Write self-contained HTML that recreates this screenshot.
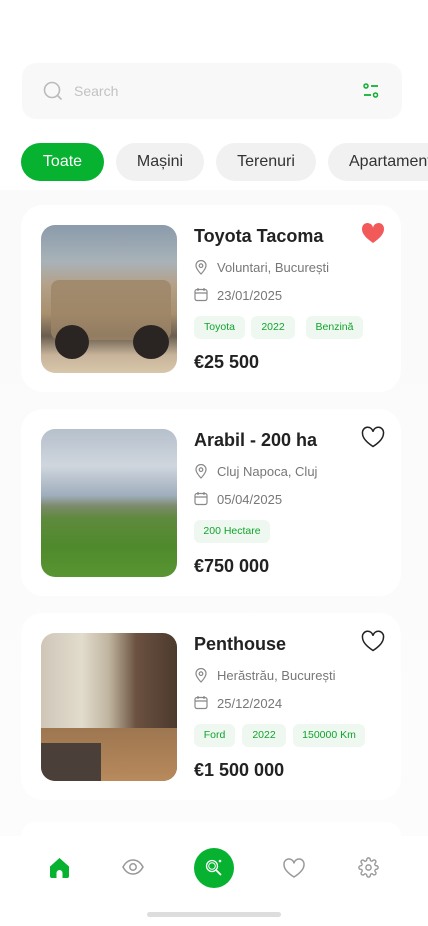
<!DOCTYPE html>
<html><head><meta charset="utf-8"><style>
*{margin:0;padding:0;box-sizing:border-box}
html,body{width:428px;height:926px;overflow:hidden}
body{background:#fff;font-family:"Liberation Sans",sans-serif;position:relative;color:#222}
.search{position:absolute;left:22px;top:63px;width:380px;height:56px;background:#f8f8f8;border-radius:14px}
.search span{position:absolute;left:52px;top:20px;font-size:14px;color:#c2c2c2}
.chip{position:absolute;top:143px;height:38px;border-radius:19px;background:#f1f1f1;font-size:16px;color:#333;line-height:38px;text-align:center}
.bg{position:absolute;left:0;top:190px;width:428px;height:646px;background:linear-gradient(180deg,#fafafa,#fcfcfc)}
.card{position:absolute;left:21px;width:380px;height:187px;background:#fff;border-radius:22px}
.img{position:absolute;left:20px;top:20px;width:136px;height:148px;border-radius:14px;overflow:hidden}
.t{position:absolute;left:173px;top:21px;font-size:18px;font-weight:bold;color:#222}
.l{position:absolute;left:196px;font-size:13px;color:#777}
.ic{position:absolute;left:173px}
.tag{position:absolute;height:23px;line-height:23px;border-radius:6px;background:#eff8f0;color:#0fa42c;font-size:10.5px;text-align:center}
.p{position:absolute;left:173px;font-size:18px;font-weight:bold;color:#222}
.hrt{position:absolute;left:340px;top:17px}
.nav{position:absolute;left:0;top:836px;width:428px;height:90px;background:#fff}
</style></head><body>
<div class="bg"></div>
<div class="search">
<svg style="position:absolute;left:21px;top:18px" width="20" height="20" viewBox="0 0 20 20"><circle cx="9" cy="9" r="7.5" fill="none" stroke="#bbb" stroke-width="1.6"/><path d="M14.5 14.5L18 18" stroke="#bbb" stroke-width="1.6" stroke-linecap="round"/></svg>
<span>Search</span>
<svg style="position:absolute;left:341px;top:20px" width="18" height="16" viewBox="0 0 18 16"><circle cx="3" cy="3" r="2" fill="none" stroke="#0db02f" stroke-width="1.5"/><path d="M8 3h7M1 12h7" stroke="#0db02f" stroke-width="1.8"/><circle cx="12.5" cy="12" r="2" fill="none" stroke="#0db02f" stroke-width="1.5"/></svg>
</div>
<div class="chip" style="left:21px;width:83px;background:#06b22f;color:#fff">Toate</div>
<div class="chip" style="left:116px;width:88px">Mașini</div>
<div class="chip" style="left:216px;width:100px">Terenuri</div>
<div class="chip" style="left:328px;width:100px;text-align:left;padding-left:21px;border-radius:19px 0 0 19px;white-space:nowrap;overflow:hidden">Apartamente</div>

<div class="card" style="top:205px">
<div class="img" style="background:linear-gradient(180deg,#8b9bab 0%,#a8b2b8 25%,#b4a189 40%,#a88f6e 60%,#6a5d4f 75%,#c7b49a 88%,#d8c6aa 100%)"><div style="position:absolute;left:10px;top:55px;width:120px;height:60px;background:#9c8466;border-radius:8px;opacity:.8"></div><div style="position:absolute;left:14px;top:100px;width:34px;height:34px;border-radius:50%;background:#2a2522"></div><div style="position:absolute;left:92px;top:100px;width:36px;height:34px;border-radius:50%;background:#2a2522"></div></div>
<div class="t">Toyota Tacoma</div>
<svg class="hrt" width="24" height="22" viewBox="0 0 24 22"><path d="M12 21C5 16 1 12 1 7a5.5 5.5 0 0 1 11-1 5.5 5.5 0 0 1 11 1c0 5-4 9-11 14z" fill="#f25a5a"/></svg>
<svg class="ic" style="top:55px" width="14" height="15" viewBox="0 0 14 15"><path d="M7 14s5-5 5-8.5A5 5 0 0 0 2 5.5C2 9 7 14 7 14z" fill="none" stroke="#888" stroke-width="1.2"/><circle cx="7" cy="5.7" r="1.8" fill="none" stroke="#888" stroke-width="1.2"/></svg>
<div class="l" style="top:55px">Voluntari, București</div>
<svg class="ic" style="top:82px" width="14" height="15" viewBox="0 0 14 15"><rect x="1" y="2.5" width="12" height="11" rx="2" fill="none" stroke="#888" stroke-width="1.2"/><path d="M1 6h12M4 1v3M10 1v3" stroke="#888" stroke-width="1.2"/></svg>
<div class="l" style="top:83px">23/01/2025</div>
<div class="tag" style="left:173px;top:111px;width:51px">Toyota</div>
<div class="tag" style="left:230px;top:111px;width:44px">2022</div>
<div class="tag" style="left:285px;top:111px;width:57px">Benzină</div>
<div class="p" style="top:147px">€25 500</div>
</div>

<div class="card" style="top:409px">
<div class="img" style="background:linear-gradient(180deg,#b6c0cb 0%,#cfd6de 25%,#9fadbc 45%,#7c8a6c 52%,#5f8a3e 60%,#4f8a2c 80%,#5a9532 100%)"></div>
<div class="t">Arabil - 200 ha</div>
<svg class="hrt" width="24" height="22" viewBox="0 0 24 22"><path d="M12 20.5C5 16 1.5 12 1.5 7.3a5 5 0 0 1 10.5-1.5 5 5 0 0 1 10.5 1.5c0 4.7-3.5 8.7-10.5 13.2z" fill="none" stroke="#222" stroke-width="1.5"/></svg>
<svg class="ic" style="top:55px" width="14" height="15" viewBox="0 0 14 15"><path d="M7 14s5-5 5-8.5A5 5 0 0 0 2 5.5C2 9 7 14 7 14z" fill="none" stroke="#888" stroke-width="1.2"/><circle cx="7" cy="5.7" r="1.8" fill="none" stroke="#888" stroke-width="1.2"/></svg>
<div class="l" style="top:55px">Cluj Napoca, Cluj</div>
<svg class="ic" style="top:82px" width="14" height="15" viewBox="0 0 14 15"><rect x="1" y="2.5" width="12" height="11" rx="2" fill="none" stroke="#888" stroke-width="1.2"/><path d="M1 6h12M4 1v3M10 1v3" stroke="#888" stroke-width="1.2"/></svg>
<div class="l" style="top:83px">05/04/2025</div>
<div class="tag" style="left:173px;top:111px;width:76px">200 Hectare</div>
<div class="p" style="top:147px">€750 000</div>
</div>

<div class="card" style="top:613px">
<div class="img" style="background:linear-gradient(90deg,#cfc6b8 0%,#e2dccd 30%,#bfb49f 50%,#6b5140 70%,#4c3a2e 100%)"><div style="position:absolute;left:0;top:95px;width:136px;height:53px;background:linear-gradient(180deg,#9d7650,#b88a5c)"></div><div style="position:absolute;left:0;top:110px;width:60px;height:38px;background:#4b3f39"></div></div>
<div class="t">Penthouse</div>
<svg class="hrt" width="24" height="22" viewBox="0 0 24 22"><path d="M12 20.5C5 16 1.5 12 1.5 7.3a5 5 0 0 1 10.5-1.5 5 5 0 0 1 10.5 1.5c0 4.7-3.5 8.7-10.5 13.2z" fill="none" stroke="#222" stroke-width="1.5"/></svg>
<svg class="ic" style="top:55px" width="14" height="15" viewBox="0 0 14 15"><path d="M7 14s5-5 5-8.5A5 5 0 0 0 2 5.5C2 9 7 14 7 14z" fill="none" stroke="#888" stroke-width="1.2"/><circle cx="7" cy="5.7" r="1.8" fill="none" stroke="#888" stroke-width="1.2"/></svg>
<div class="l" style="top:55px">Herăstrău, București</div>
<svg class="ic" style="top:82px" width="14" height="15" viewBox="0 0 14 15"><rect x="1" y="2.5" width="12" height="11" rx="2" fill="none" stroke="#888" stroke-width="1.2"/><path d="M1 6h12M4 1v3M10 1v3" stroke="#888" stroke-width="1.2"/></svg>
<div class="l" style="top:83px">25/12/2024</div>
<div class="tag" style="left:173px;top:111px;width:41px">Ford</div>
<div class="tag" style="left:221px;top:111px;width:44px">2022</div>
<div class="tag" style="left:272px;top:111px;width:72px">150000 Km</div>
<div class="p" style="top:147px">€1 500 000</div>
</div>
<div class="card" style="top:822px;height:14px;border-radius:22px 22px 0 0"></div>

<div class="nav">
<svg style="position:absolute;left:49px;top:21px" width="21" height="21" viewBox="0 0 21 21"><path d="M1 9.5L10.5 1 20 9.5V19a2 2 0 0 1-2 2h-4.5v-5a3 3 0 0 0-6 0v5H3a2 2 0 0 1-2-2z" fill="#06b22f"/></svg>
<svg style="position:absolute;left:122px;top:23px" width="22" height="16" viewBox="0 0 22 16"><path d="M1 8C4 2.5 7.5 1 11 1s7 1.5 10 7c-3 5.5-6.5 7-10 7S4 13.5 1 8z" fill="none" stroke="#999" stroke-width="1.5"/><circle cx="11" cy="8" r="3.2" fill="none" stroke="#999" stroke-width="1.5"/></svg>
<div style="position:absolute;left:194px;top:12px;width:40px;height:40px;border-radius:50%;background:#06b22f"></div>
<svg style="position:absolute;left:204px;top:22px" width="20" height="20" viewBox="0 0 20 20"><circle cx="8" cy="8" r="5.5" fill="none" stroke="#fff" stroke-width="1.3"/><circle cx="8" cy="8" r="3.3" fill="none" stroke="#fff" stroke-width="1"/><path d="M12 12l4.5 4.5" stroke="#fff" stroke-width="1.8" stroke-linecap="round"/><circle cx="16" cy="3" r="1.3" fill="#fff"/></svg>
<svg style="position:absolute;left:283px;top:22px" width="22" height="20" viewBox="0 0 22 20"><path d="M11 19C4.5 14.8 1 11 1 6.7a4.8 4.8 0 0 1 10-1.3 4.8 4.8 0 0 1 10 1.3C21 11 17.5 14.8 11 19z" fill="none" stroke="#999" stroke-width="1.5"/></svg>
<svg style="position:absolute;left:358px;top:21px" width="21" height="21" viewBox="0 0 24 24"><path d="M12 15a3 3 0 1 0 0-6 3 3 0 0 0 0 6z" fill="none" stroke="#999" stroke-width="1.6"/><path d="M19.4 15a1.7 1.7 0 0 0 .3 1.8l.1.1a2 2 0 1 1-2.8 2.8l-.1-.1a1.7 1.7 0 0 0-1.8-.3 1.7 1.7 0 0 0-1 1.5V21a2 2 0 1 1-4 0v-.1a1.7 1.7 0 0 0-1.1-1.5 1.7 1.7 0 0 0-1.8.3l-.1.1a2 2 0 1 1-2.8-2.8l.1-.1a1.7 1.7 0 0 0 .3-1.8 1.7 1.7 0 0 0-1.5-1H3a2 2 0 1 1 0-4h.1a1.7 1.7 0 0 0 1.5-1.1 1.7 1.7 0 0 0-.3-1.8l-.1-.1a2 2 0 1 1 2.8-2.8l.1.1a1.7 1.7 0 0 0 1.8.3H9a1.7 1.7 0 0 0 1-1.5V3a2 2 0 1 1 4 0v.1a1.7 1.7 0 0 0 1 1.5 1.7 1.7 0 0 0 1.8-.3l.1-.1a2 2 0 1 1 2.8 2.8l-.1.1a1.7 1.7 0 0 0-.3 1.8V9a1.7 1.7 0 0 0 1.5 1H21a2 2 0 1 1 0 4h-.1a1.7 1.7 0 0 0-1.5 1z" fill="none" stroke="#999" stroke-width="1.6"/></svg>
<div style="position:absolute;left:147px;top:76px;width:134px;height:5px;border-radius:3px;background:#ddd"></div>
</div>
</body></html>
